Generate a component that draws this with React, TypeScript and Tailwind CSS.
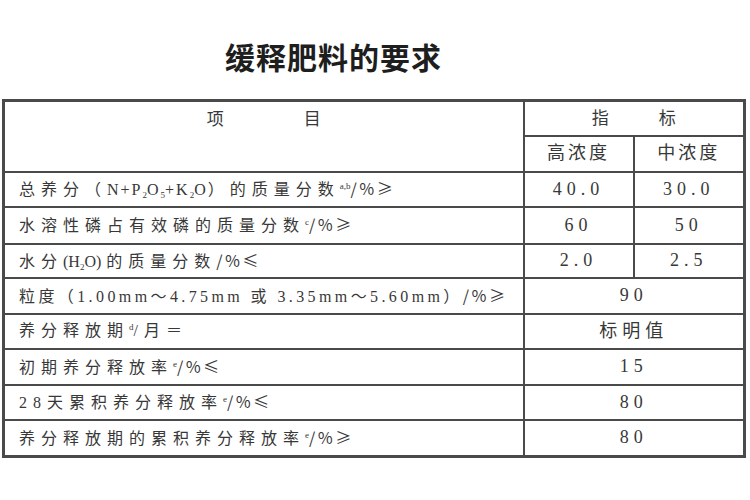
const serif = "font-['Liberation_Serif','Noto_Sans_CJK_SC',serif]";

type Row = {
  label: React.ReactNode;
  h: string;
  track?: string;
  values: string[];
};

const Sup = ({ children }: { children: React.ReactNode }) => (
  <span className="relative -top-[6px] text-[9px] tracking-normal">{children}</span>
);
const Sub = ({ children }: { children: React.ReactNode }) => (
  <span className="relative top-[3px] text-[9px] tracking-normal">{children}</span>
);
// latin runs sit tighter than the spaced-out CJK text
const Tight = ({ children }: { children: React.ReactNode }) => (
  <span className="tracking-[2px]">{children}</span>
);
// unit suffix, e.g. /％≥
const Unit = ({ children }: { children: React.ReactNode }) => (
  <span className="tracking-[2px] font-['Noto_Sans_CJK_SC',sans-serif]">{children}</span>
);

const rows: Row[] = [
  {
    h: 'h-[35px]',
    label: (
      <>
        总养分（
        <Tight>
          N+P<Sub>2</Sub>O<Sub>5</Sub>+K<Sub>2</Sub>O
        </Tight>
        ）的质量分数<Sup>a,b</Sup>
        <Unit>/％≥</Unit>
      </>
    ),
    values: ['40.0', '30.0'],
  },
  {
    h: 'h-[37px]',
    label: (
      <>
        水溶性磷占有效磷的质量分数<Sup>c</Sup>
        <Unit>/％≥</Unit>
      </>
    ),
    values: ['60', '50'],
  },
  {
    h: 'h-[34px]',
    label: (
      <>
        水分
        <span className="tracking-normal mr-[5px]">
          (H<Sub>2</Sub>O)
        </span>
        的质量分数<Unit>/％≤</Unit>
      </>
    ),
    values: ['2.0', '2.5'],
  },
  {
    h: 'h-[36px]',
    track: 'tracking-[3.4px]',
    label: (
      <>
        粒度（1.00mm～4.75mm 或 3.35mm～5.60mm）<Unit>/％≥</Unit>
      </>
    ),
    values: ['90'],
  },
  {
    h: 'h-[35px]',
    label: (
      <>
        养分释放期<Sup>d</Sup>/月＝
      </>
    ),
    values: ['标明值'],
  },
  {
    h: 'h-[36px]',
    label: (
      <>
        初期养分释放率<Sup>e</Sup>
        <Unit>/％≤</Unit>
      </>
    ),
    values: ['15'],
  },
  {
    h: 'h-[35px]',
    label: (
      <>
        28天累积养分释放率<Sup>e</Sup>
        <Unit>/％≤</Unit>
      </>
    ),
    values: ['80'],
  },
  {
    h: 'h-[37px]',
    label: (
      <>
        养分释放期的累积养分释放率<Sup>e</Sup>
        <Unit>/％≥</Unit>
      </>
    ),
    values: ['80'],
  },
];

export default function App() {
  return (
    <div className={`w-[750px] h-[500px] bg-white text-[#383838] ${serif}`}>
      {/* Title */}
      <div className="h-[99px] pt-[41px] pl-[225px]">
        <h1 className="text-[30px] leading-[36px] font-bold tracking-[1px] text-[#1e1e1e]">缓释肥料的要求</h1>
      </div>

      <table className="ml-[2px] w-[741px] table-fixed border-collapse border-[3px] border-[#4a4a4a]">
        <colgroup>
          <col className="w-[520px]" />
          <col className="w-[110px]" />
          <col className="w-[111px]" />
        </colgroup>
        <tbody>
          <tr className="h-[35px]">
            <td rowSpan={2} className="border-[2px] border-[#4a4a4a] align-top pt-[5px]">
              <div className="flex justify-center gap-[80px] text-[17px]">
                <span>项</span>
                <span>目</span>
              </div>
            </td>
            <td colSpan={2} className="border-[2px] border-[#4a4a4a]">
              <div className="flex justify-center gap-[50px] text-[17px]">
                <span>指</span>
                <span>标</span>
              </div>
            </td>
          </tr>
          <tr className="h-[36px]">
            <td className="border-[2px] border-[#4a4a4a] text-center text-[18px] tracking-[3px]">高浓度</td>
            <td className="border-[2px] border-[#4a4a4a] text-center text-[18px] tracking-[3px]">中浓度</td>
          </tr>
          {rows.map((r, i) => (
            <tr key={i} className={r.h}>
              <td
                className={`border-[2px] border-[#4a4a4a] pl-[14px] text-[16px] whitespace-nowrap ${r.track ?? 'tracking-[6px]'}`}
              >
                {r.label}
              </td>
              {r.values.length === 2 ? (
                r.values.map((v, j) => (
                  <td key={j} className="border-[2px] border-[#4a4a4a] text-center text-[18px] tracking-[5px]">
                    {v}
                  </td>
                ))
              ) : (
                <td colSpan={2} className="border-[2px] border-[#4a4a4a] text-center text-[18px] tracking-[5px]">
                  {r.values[0]}
                </td>
              )}
            </tr>
          ))}
        </tbody>
      </table>
    </div>
  );
}
